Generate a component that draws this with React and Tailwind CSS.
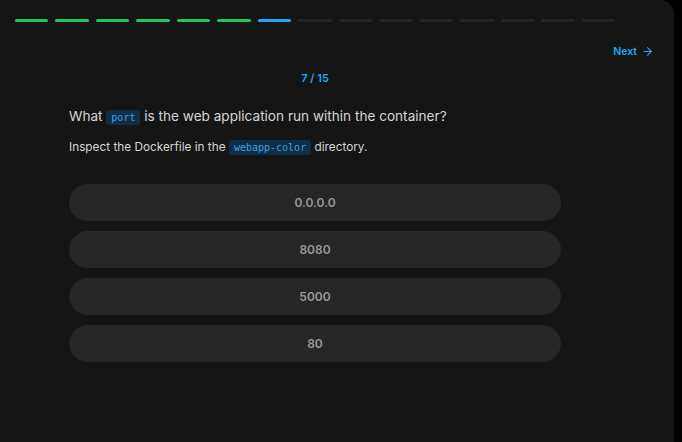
import { ArrowRight } from "lucide-react";

const TOTAL = 15;
const CURRENT = 7;
const OPTIONS = ["0.0.0.0", "8080", "5000", "80"];

function Code({ children }) {
  return (
    <code className="rounded-[3px] bg-[#0f2d44] px-[5px] py-[2px] font-['DejaVu_Sans_Mono',monospace] text-[10px] text-[#3ba1e6]">
      {children}
    </code>
  );
}

export default function App() {
  return (
    <div className="h-[442px] w-[682px] bg-black font-['Inter',sans-serif]">
      <div className="flex h-full w-[674px] flex-col rounded-tr-[14px] bg-[#151515]">
        {/* Progress */}
        <div className="ml-[15px] flex w-[600px] gap-[7px] pt-[19px]">
          {Array.from({ length: TOTAL }).map((_, i) => (
            <div
              key={i}
              className={`h-[3px] flex-1 rounded-full ${
                i < CURRENT - 1
                  ? "bg-[#22c55e]"
                  : i === CURRENT - 1
                  ? "bg-[#1ea7f5]"
                  : "bg-[#242424]"
              }`}
            />
          ))}
        </div>

        {/* Next */}
        <div className="flex justify-end pr-[20px] pt-[22px]">
          <button className="flex items-center gap-[4px] text-[10.5px] font-semibold text-[#1ea7f5]">
            Next
            <ArrowRight size={13} strokeWidth={2} />
          </button>
        </div>

        {/* Body */}
        <div className="ml-[69px] w-[492px]">
          <p className="mt-[10px] text-center text-[11px] font-semibold text-[#1ea7f5]">
            {CURRENT} / {TOTAL}
          </p>

          <h2 className="mt-[20px] text-[13.6px] leading-[20px] text-[#d6d6d6]">
            What <Code>port</Code> is the web application run within the container?
          </h2>
          <p className="mt-[10px] text-[11.8px] leading-[18px] text-[#d6d6d6]">
            Inspect the Dockerfile in the <Code>webapp-color</Code> directory.
          </p>

          <div className="mt-[27px] flex flex-col gap-[10px]">
            {OPTIONS.map((o) => (
              <button
                key={o}
                className="h-[37px] w-full rounded-full bg-[#262626] text-[12px] font-semibold text-[#9a9a9a]"
              >
                {o}
              </button>
            ))}
          </div>
        </div>
      </div>
    </div>
  );
}
